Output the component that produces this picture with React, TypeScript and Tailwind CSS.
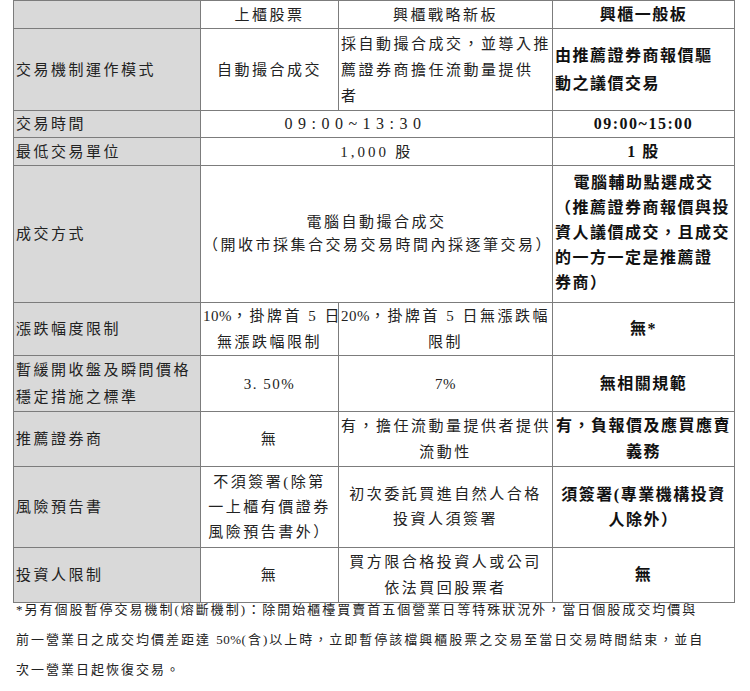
const cell = "border border-[#7c7c7c] px-[2px] align-middle whitespace-nowrap";
const label = cell + " bg-[#d9d9d9] text-left";
const mid = cell + " text-center";
const strong = cell + " text-center font-bold text-[16px] tracking-[1.5px] text-[#111]";

function App() {
  return (
    <div className="w-[750px] h-[691px] bg-white text-[#222] font-['Liberation_Serif','Noto_Sans_CJK_TC',serif] text-[15px] tracking-[2.5px] leading-[26px]">
      <table className="ml-[13px] w-[721px] table-fixed border-collapse border border-[#555]">
        <colgroup>
          <col className="w-[187px]" />
          <col className="w-[138px]" />
          <col className="w-[214px]" />
          <col className="w-[182px]" />
        </colgroup>
        <tbody>
          <tr className="h-[28px]">
            <td className={label}></td>
            <td className={mid}>上櫃股票</td>
            <td className={mid}>興櫃戰略新板</td>
            <td className={strong}>興櫃一般板</td>
          </tr>
          <tr className="h-[82px]">
            <td className={label}>交易機制運作模式</td>
            <td className={mid}>自動撮合成交</td>
            <td className={cell + " text-left"}>
              採自動撮合成交，並導入推
              <br />
              薦證券商擔任流動量提供
              <br />
              者
            </td>
            <td className={strong + " text-left leading-[28px]"}>
              由推薦證券商報價驅
              <br />
              動之議價交易
            </td>
          </tr>
          <tr className="h-[27px]">
            <td className={label}>交易時間</td>
            <td className={mid + " text-[16px] tracking-[5.5px] pr-[44px]"} colSpan={2}>
              09:00~13:30
            </td>
            <td className={strong + " tracking-[0.5px]"}>09:00~15:00</td>
          </tr>
          <tr className="h-[28px]">
            <td className={label}>最低交易單位</td>
            <td className={mid} colSpan={2}>
              <span className="tracking-[3px]">1,000</span> 股
            </td>
            <td className={strong}>1 股</td>
          </tr>
          <tr className="h-[137px]">
            <td className={label}>成交方式</td>
            <td className={mid + " leading-[23px]"} colSpan={2}>
              電腦自動撮合成交
              <br />
              （開收市採集合交易交易時間內採逐筆交易）
            </td>
            <td className={strong + " text-left leading-[25px] pb-[4px]"}>
              <div className="text-center">電腦輔助點選成交</div>
              （推薦證券商報價與投
              <br />
              資人議價成交，且成交
              <br />
              的一方一定是推薦證
              <br />
              券商）
            </td>
          </tr>
          <tr className="h-[53px]">
            <td className={label}>漲跌幅度限制</td>
            <td className={mid}>
              <span className="tracking-[0.5px]">10%</span>，掛牌首 5 日
              <br />
              無漲跌幅限制
            </td>
            <td className={mid}>
              <span className="tracking-[0.5px]">20%</span>，掛牌首 5 日無漲跌幅
              <br />
              限制
            </td>
            <td className={strong}>無*</td>
          </tr>
          <tr className="h-[56px]">
            <td className={label + " leading-[27px]"}>
              暫緩開收盤及瞬間價格
              <br />
              穩定措施之標準
            </td>
            <td className={mid + " tracking-[1.5px]"}>3. 50%</td>
            <td className={mid + " tracking-[0.5px]"}>7%</td>
            <td className={strong}>無相關規範</td>
          </tr>
          <tr className="h-[55px]">
            <td className={label}>推薦證券商</td>
            <td className={mid}>無</td>
            <td className={mid}>
              有，擔任流動量提供者提供
              <br />
              流動性
            </td>
            <td className={strong}>
              有，負報價及應買應賣
              <br />
              義務
            </td>
          </tr>
          <tr className="h-[81px]">
            <td className={label}>風險預告書</td>
            <td className={mid + " leading-[25px]"}>
              不須簽署(除第
              <br />
              一上櫃有價證券
              <br />
              風險預告書外）
            </td>
            <td className={mid + " leading-[25px]"}>
              初次委託買進自然人合格
              <br />
              投資人須簽署
            </td>
            <td className={strong + " leading-[25px]"}>
              須簽署(專業機構投資
              <br />
              人除外）
            </td>
          </tr>
          <tr className="h-[55px]">
            <td className={label}>投資人限制</td>
            <td className={mid}>無</td>
            <td className={mid}>
              買方限合格投資人或公司
              <br />
              依法買回股票者
            </td>
            <td className={strong}>無</td>
          </tr>
        </tbody>
      </table>
      <div className="-mt-[8px] pl-[16px] text-[13px] tracking-[2px] leading-[30px] whitespace-nowrap">
        <div>*另有個股暫停交易機制(熔斷機制)：除開始櫃檯買賣首五個營業日等特殊狀況外，當日個股成交均價與</div>
        <div>
          前一營業日之成交均價差距達 <span className="tracking-[0.5px]">50%</span>(含)以上時，立即暫停該檔興櫃股票之交易至當日交易時間結束，並自
        </div>
        <div>次一營業日起恢復交易。</div>
      </div>
    </div>
  );
}

export default App;
